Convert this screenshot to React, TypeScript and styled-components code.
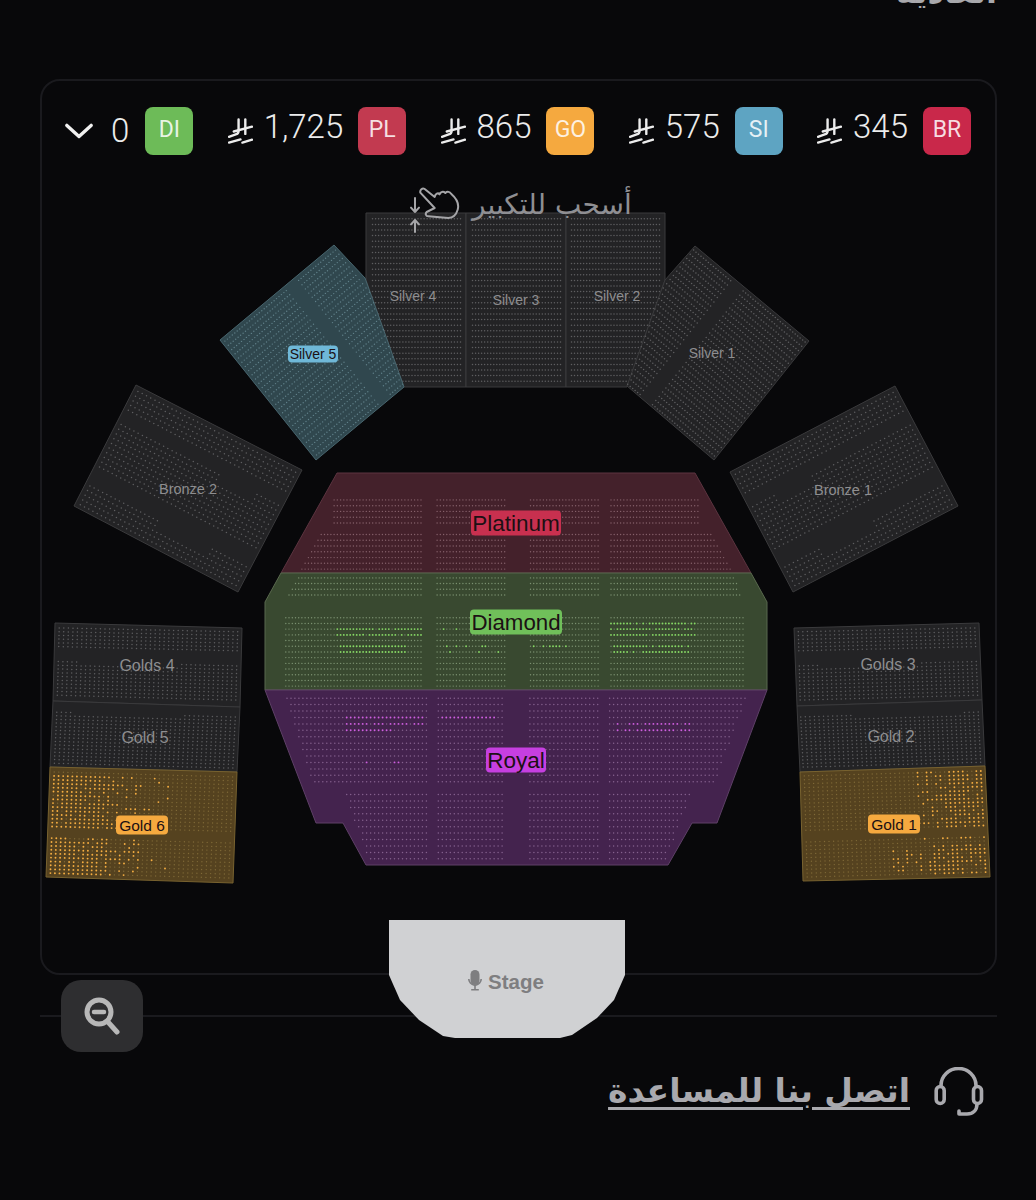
import { Fragment, useMemo } from 'react'
import styled, { createGlobalStyle } from 'styled-components'

const GlobalStyle = createGlobalStyle`
	html, body {
		margin: 0;
		padding: 0;
		background: #08080a;
	}
`

const Page = styled.div`
	width: 1036px;
	height: 1200px;
	box-sizing: border-box;
	padding: 0 39px 0 40px;
	overflow: hidden;
	background: #08080a;
	font-family: 'Roboto', sans-serif;
`

const ClippedTitle = styled.div`
	height: 8px;
	overflow: hidden;
	display: flex;
	justify-content: flex-start;
	align-items: flex-end;
	font-family: 'DejaVu Sans', sans-serif;
	font-weight: 700;
	font-size: 32px;
	line-height: 32px;
	color: #a8a8ac;
	direction: rtl;
`

const MapPanel = styled.section`
	position: relative;
	z-index: 1;
	box-sizing: border-box;
	height: 896px;
	margin-top: 71px;
	padding-top: 26px;
	border: 2px solid #1a1a1e;
	border-radius: 20px;
`

const PriceBar = styled.div`
	display: flex;
	justify-content: space-between;
	align-items: center;
	height: 48px;
	padding: 0 24px 0 23px;
`

const PriceGroup = styled.div`
	display: flex;
	align-items: center;
	gap: ${(p: { $gap: number }) => p.$gap}px;
`

const ZeroAmount = styled.span`
	margin-left: 6px;
`

const Amount = styled.span`
	font-size: 33px;
	font-weight: 350;
	line-height: 40px;
	padding-bottom: 9px;
	color: #ececec;
`

const TierBadge = styled.span<{ $color: string }>`
	display: flex;
	align-items: center;
	justify-content: center;
	box-sizing: border-box;
	width: 48px;
	height: 48px;
	margin-left: 4px;
	padding-bottom: 3px;
	border-radius: 8px;
	background: ${(p) => p.$color};
	color: rgba(255, 255, 255, 0.85);
	font-size: 23px;
	font-weight: 400;
`

const DragHint = styled.div`
	position: absolute;
	z-index: 2;
	top: 105px;
	left: 359px;
	display: flex;
	align-items: flex-start;
	gap: 11px;
`

const HintText = styled.span`
	font-family: 'DejaVu Sans', sans-serif;
	font-size: 28px;
	line-height: 40px;
	margin-top: -1px;
	color: #8f8f93;
	direction: rtl;
`

const SeatMap = styled.svg`
	display: block;
	margin: 25px 0 0 -2px;
	overflow: visible;
`

const SectionShape = styled.polygon<{ $fill: string; $stroke: string }>`
	fill: ${(p) => p.$fill};
	stroke: ${(p) => p.$stroke};
	stroke-width: 1;
`

const Seats = styled.path<{ $color: string; $size: number }>`
	fill: none;
	stroke: ${(p) => p.$color};
	stroke-width: ${(p) => p.$size};
	stroke-linecap: round;
`

const LabelText = styled.text<{ $size: number; $color: string }>`
	font-family: 'Liberation Sans', sans-serif;
	font-size: ${(p) => p.$size}px;
	fill: ${(p) => p.$color};
	text-anchor: middle;
	dominant-baseline: central;
`

const StageShape = styled.polygon`
	fill: #d0d1d3;
`

const StageLabel = styled.text`
	font-family: 'Liberation Sans', sans-serif;
	font-size: 20.5px;
	font-weight: 700;
	fill: #7e7e80;
	dominant-baseline: central;
`

const ToolRow = styled.div`
	height: 72px;
	margin-top: 5px;
	padding-left: 21px;
	background: linear-gradient(#1a1a1e, #1a1a1e) center / 100% 2px no-repeat;
`

const ZoomButton = styled.button`
	position: relative;
	z-index: 2;
	display: flex;
	align-items: center;
	justify-content: center;
	width: 82px;
	height: 72px;
	padding: 0;
	border: 0;
	border-radius: 20px;
	background: #2e2e30;
`

const ContactRow = styled.div`
	display: flex;
	justify-content: flex-end;
	align-items: center;
	gap: 24px;
	height: 56px;
	margin-top: 12px;
	padding-right: 13px;
	color: #a9a9ae;
`

const ContactLink = styled.a`
	font-family: 'DejaVu Sans', sans-serif;
	font-size: 33px;
	font-weight: 700;
	margin-top: -3px;
	color: #a9a9ae;
	text-decoration: underline;
	text-underline-offset: 5px;
	direction: rtl;
`

type Point = [number, number]
type Box = [number, number, number, number]

type Tone = { fill: string; stroke: string; seat: string; lit: string; size: number }

const tones: Record<string, Tone> = {
	gray: { fill: '#232325', stroke: '#3a3a3c', seat: '#5e5e60', lit: '#5e5e60', size: 1.5 },
	silver: { fill: '#30474e', stroke: '#48666f', seat: '#5f7f88', lit: '#5f7f88', size: 1.4 },
	platinum: { fill: '#44212b', stroke: '#5c3440', seat: '#85606a', lit: '#85606a', size: 1.4 },
	diamond: { fill: '#394930', stroke: '#59694e', seat: '#7b9170', lit: '#86d865', size: 1.4 },
	royal: { fill: '#44234e', stroke: '#5e4067', seat: '#84608d', lit: '#cf5fe0', size: 1.5 },
	gold: { fill: '#55421f', stroke: '#78622f', seat: '#7f6937', lit: '#f5ae42', size: 1.4 },
}

type Section = {
	id: string
	tone: string
	poly: Point[]
	quad: [Point, Point, Point, Point]
	rows: number
	cols: number
	area?: Point[]
	gaps?: Box[] // u0, u1, v0, v1 in grid space
	xGaps?: [number, number][]
	lit?: [number, number, number, number, number][] // x0, y0, x1, y1, density
}

const bronzeGaps: Box[] = [
	[0, 1, 0.19, 0.27],
	[0.62, 0.85, 0.27, 0.35],
	[0, 1, 0.7, 0.78],
	[0.45, 0.75, 0.78, 0.86],
]
const goldTopGaps: Box[] = [
	[0, 1, 0.33, 0.46],
	[0.12, 0.68, 0.46, 0.5],
]

const rect = (x0: number, y0: number, x1: number, y1: number): [Point, Point, Point, Point] => [
	[x0, y0],
	[x1, y0],
	[x1, y1],
	[x0, y1],
]

const sections: Section[] = [
	{ id: 'silver4', tone: 'gray', poly: [[366, 213], [466, 213], [466, 387], [404, 387], [366, 280]], quad: rect(371, 216, 462, 384), rows: 30, cols: 30 },
	{ id: 'silver3', tone: 'gray', poly: [[466, 213], [566, 213], [566, 387], [466, 387]], quad: rect(471, 216, 562, 384), rows: 30, cols: 30 },
	{ id: 'silver2', tone: 'gray', poly: [[566, 213], [665, 213], [665, 280], [627, 387], [566, 387]], quad: rect(570, 216, 661, 384), rows: 30, cols: 30 },
	{ id: 'silver1', tone: 'gray', poly: [[695, 246], [809, 341], [714, 460], [627, 386], [665, 280]], quad: [[808, 341], [694, 247], [600, 365], [714, 459]], rows: 28, cols: 46, gaps: [[0.57, 0.66, 0, 1]] },
	{ id: 'silver5', tone: 'silver', poly: [[334, 245], [365, 278], [404, 387], [316, 460], [220, 340]], quad: [[222, 340], [335, 247], [430, 365], [317, 458]], rows: 28, cols: 46, gaps: [[0.57, 0.66, 0, 1]] },
	{ id: 'bronze2', tone: 'gray', poly: [[136, 385], [302, 470], [238, 592], [74, 506]], quad: [[137, 388], [299, 471], [237, 589], [77, 506]], rows: 25, cols: 38, gaps: bronzeGaps },
	{ id: 'bronze1', tone: 'gray', poly: [[895, 386], [958, 506], [793, 592], [730, 472]], quad: [[894, 389], [732, 473], [794, 589], [955, 506]], rows: 25, cols: 38, gaps: bronzeGaps },
	{
		id: 'platinum', tone: 'platinum',
		poly: [[337, 473], [695, 473], [751, 573], [281, 573]],
		quad: rect(281, 497, 751, 572), rows: 13, cols: 146,
		area: [[331, 497], [700, 497], [700, 526], [712, 533], [733, 572], [299, 572], [320, 533], [331, 526]],
		xGaps: [[422, 434], [505, 528], [600, 610]],
		gaps: [[0, 1, 0.38, 0.46]],
	},
	{
		id: 'diamond', tone: 'diamond',
		poly: [[281, 573], [751, 573], [767, 602], [767, 690], [265, 690], [265, 602]],
		quad: rect(281, 575, 751, 689), rows: 20, cols: 146,
		area: [[300, 574], [732, 574], [745, 600], [745, 690], [285, 690], [285, 600]],
		xGaps: [[423, 435], [505, 528], [600, 610]],
		gaps: [[0, 1, 0.2, 0.36]],
		lit: [
			[336, 626, 424, 640, 0.9], [340, 644, 408, 654, 1], [434, 626, 500, 634, 0.2], [446, 644, 500, 652, 0.3],
			[610, 620, 695, 640, 0.9], [612, 644, 690, 654, 0.9], [530, 644, 590, 650, 0.5],
		],
	},
	{
		id: 'royal', tone: 'royal',
		poly: [[265, 690], [767, 690], [717, 823], [692, 823], [668, 865], [366, 865], [343, 823], [316, 823]],
		quad: rect(281, 695, 751, 862), rows: 26, cols: 118,
		area: [[285, 695], [748, 695], [712, 790], [692, 790], [665, 862], [368, 862], [345, 790], [315, 790]],
		xGaps: [[427, 437], [505, 528], [600, 608]],
		gaps: [[0, 1, 0.54, 0.57]],
		lit: [
			[345, 717, 425, 722, 1], [345, 722, 425, 729, 0.9], [345, 729, 392, 735, 1],
			[440, 716, 498, 722, 0.9], [616, 722, 690, 735, 0.8], [365, 762, 370, 768, 1], [394, 762, 400, 768, 1],
		],
	},
	{ id: 'gold4', tone: 'gray', poly: [[55, 623], [242, 628], [240, 707], [53, 701]], quad: [[57, 626], [240, 630], [238, 702], [55, 697]], rows: 19, cols: 40, gaps: goldTopGaps },
	{ id: 'gold5', tone: 'gray', poly: [[53, 701], [240, 707], [237, 772], [50, 767]], quad: [[55, 703], [238, 708], [235, 770], [52, 765]], rows: 17, cols: 40, gaps: [[0, 1, 0, 0.14], [0.1, 0.7, 0.14, 0.2]] },
	{
		id: 'gold6', tone: 'gold',
		poly: [[50, 767], [237, 772], [233, 883], [46, 877]],
		quad: [[52, 770], [235, 775], [231, 880], [48, 875]], rows: 27, cols: 40,
		gaps: [[0, 1, 0.56, 0.64]],
		lit: [[48, 775, 78, 880, 0.95], [78, 775, 110, 880, 0.8], [110, 775, 140, 880, 0.35], [140, 775, 170, 880, 0.1]],
	},
	{ id: 'gold3', tone: 'gray', poly: [[794, 628], [979, 623], [982, 700], [797, 706]], quad: [[796, 630], [977, 626], [980, 697], [798, 702]], rows: 19, cols: 40, gaps: goldTopGaps },
	{ id: 'gold2', tone: 'gray', poly: [[797, 706], [982, 700], [985, 766], [800, 772]], quad: [[798, 708], [980, 703], [983, 764], [801, 769]], rows: 17, cols: 40, gaps: [[0, 1, 0, 0.14], [0.3, 0.9, 0.14, 0.2]] },
	{
		id: 'gold1', tone: 'gold',
		poly: [[800, 772], [985, 766], [990, 877], [803, 881]],
		quad: [[802, 774], [983, 769], [988, 874], [805, 879]], rows: 27, cols: 40,
		gaps: [[0, 1, 0.56, 0.64]],
		lit: [[945, 768, 990, 840, 0.8], [915, 768, 945, 840, 0.4], [890, 845, 930, 880, 0.35], [930, 845, 990, 880, 0.75]],
	},
]

const labels = [
	{ text: 'Silver 4', x: 413, y: 296, size: 14 },
	{ text: 'Silver 3', x: 516, y: 300, size: 14 },
	{ text: 'Silver 2', x: 617, y: 296, size: 14 },
	{ text: 'Silver 1', x: 712, y: 353, size: 14 },
	{ text: 'Bronze 2', x: 188, y: 489, size: 14.5 },
	{ text: 'Bronze 1', x: 843, y: 490, size: 14.5 },
	{ text: 'Golds 4', x: 147, y: 665, size: 16 },
	{ text: 'Gold 5', x: 145, y: 737, size: 16 },
	{ text: 'Golds 3', x: 888, y: 664, size: 16 },
	{ text: 'Gold 2', x: 891, y: 736, size: 16 },
]

const badges = [
	{ text: 'Silver 5', x: 313, y: 354, size: 14, w: 50, h: 17, color: '#6fb8d8' },
	{ text: 'Gold 6', x: 142, y: 825, size: 15.5, w: 52, h: 19, color: '#f5a93f' },
	{ text: 'Gold 1', x: 894, y: 824, size: 15.5, w: 52, h: 19, color: '#f5a93f' },
	{ text: 'Platinum', x: 516, y: 523, size: 22.5, w: 90, h: 25, color: '#c8304f' },
	{ text: 'Diamond', x: 516, y: 622, size: 22.3, w: 92, h: 25, color: '#70c05a' },
	{ text: 'Royal', x: 516, y: 760, size: 22.5, w: 60, h: 25, color: '#c63fe0' },
]

const prices = [
	{ amount: '1,725', code: 'PL', color: '#c23a50' },
	{ amount: '865', code: 'GO', color: '#f5a93f' },
	{ amount: '575', code: 'SI', color: '#5ea4c2' },
	{ amount: '345', code: 'BR', color: '#c9284a' },
]

const stagePoints = '389,920 625,920 625,975 614,1000 597,1018 572,1035 560,1038 455,1038 443,1036 419,1020 400,1000 389,975'

const toPoints = (pts: Point[]) => pts.map((p) => p.join(',')).join(' ')

const inside = ([x, y]: Point, pts: Point[]) => {
	let hit = false
	for (let i = 0, j = pts.length - 1; i < pts.length; j = i++) {
		const [xi, yi] = pts[i]
		const [xj, yj] = pts[j]
		if (yi > y !== yj > y && x < ((xj - xi) * (y - yi)) / (yj - yi) + xi) hit = !hit
	}
	return hit
}

/* Cheap repeatable noise, so the sold seats stay put between renders */
const noise = (i: number, j: number) => {
	const n = Math.sin(i * 12.9898 + j * 78.233) * 43758.5453
	return n - Math.floor(n)
}

const buildSeats = (s: Section) => {
	const [a, b, c, d] = s.quad
	const area = s.area ?? s.poly
	let normal = ''
	let lit = ''
	for (let j = 0; j < s.rows; j++) {
		const v = (j + 0.5) / s.rows
		for (let i = 0; i < s.cols; i++) {
			const u = (i + 0.5) / s.cols
			if (s.gaps?.some(([u0, u1, v0, v1]) => u >= u0 && u <= u1 && v >= v0 && v <= v1)) continue
			const x = (1 - v) * ((1 - u) * a[0] + u * b[0]) + v * ((1 - u) * d[0] + u * c[0])
			const y = (1 - v) * ((1 - u) * a[1] + u * b[1]) + v * ((1 - u) * d[1] + u * c[1])
			if (!inside([x, y], area)) continue
			if (s.xGaps?.some(([x0, x1]) => x >= x0 && x <= x1)) continue
			const seat = `M${x.toFixed(1)} ${y.toFixed(1)}h.01`
			const zone = s.lit?.find(([x0, y0, x1, y1]) => x >= x0 && x <= x1 && y >= y0 && y <= y1)
			if (zone && noise(i, j) < zone[4]) lit += seat
			else normal += seat
		}
	}
	return { normal, lit }
}

/* The riyal mark in the price bar */
const RiyalIcon = () => (
	<svg width='25' height='26' viewBox='0 0 26 26' fill='none' stroke='#ececec' strokeWidth='2.5' strokeLinecap='round'>
		<path d='M11 1v12c0 2-1 3-3 3.6L1 19' />
		<path d='M18 1v15' />
		<path d='M6 13.5 25 8.5' />
		<path d='M1 25l12-3.2' />
		<path d='M15 25l10-3' />
	</svg>
)

const ChevronIcon = () => (
	<svg width='28' height='16' viewBox='0 0 30 16' fill='none' stroke='#f0f0f0' strokeWidth='3.6' strokeLinecap='round' strokeLinejoin='round'>
		<path d='M2 2l13 12L28 2' />
	</svg>
)

const PinchHandIcon = () => (
	<svg width='60' height='50' viewBox='0 0 180 150' fill='none' stroke='#a5a5a8' strokeWidth='6' strokeLinecap='round' strokeLinejoin='round'>
		<path d='M58 20c-2-8 6-15 13-11l30 24c2-10 10-14 15-8 2-8 11-10 17-4 6-6 13-4 18 3 16 14 24 30 19 47-4 14-14 24-28 25l-60-5c-8 0-10-8-5-13l24-12z' />
		<path d='M42 36v42M30 65l12 13 12-13' />
		<path d='M42 138v-36M30 115l12-13 12 13' />
	</svg>
)

const ZoomOutIcon = () => (
	<svg width='36' height='38' viewBox='0 0 36 38' fill='none' stroke='#b8b8b8' strokeLinecap='round'>
		<circle cx='15' cy='15' r='12' strokeWidth='5' />
		<path d='M10 15h10' strokeWidth='4.5' />
		<path d='M24 25l9 10' strokeWidth='5' />
	</svg>
)

const HeadsetIcon = () => (
	<svg width='50' height='50' viewBox='0 0 50 50' fill='none' stroke='currentColor' strokeWidth='3.6' strokeLinecap='round' strokeLinejoin='round'>
		<path d='M7 19.5v-1a17.5 17 0 0 1 35 0v1' />
		<rect x='2.2' y='19.5' width='8' height='17' rx='4' />
		<rect x='39.5' y='19.5' width='8' height='17' rx='4' />
		<path d='M43 37c0 6-4 10-10 10h-8v-3' />
	</svg>
)

const MicIcon = () => (
	<g fill='#7e7e80'>
		<rect x='470.5' y='970' width='9' height='15' rx='4.5' />
		<path d='M468 979h1.6a5.4 5.4 0 0 0 10.8 0h1.6a7 7 0 0 1-6.2 6.9v3.1h3v1.6h-7.6V989h3v-3.1a7 7 0 0 1-6.2-6.9z' />
	</g>
)

const VenueMap = () => {
	const seats = useMemo(() => sections.map((s) => ({ ...s, ...buildSeats(s) })), [])
	return (
		<SeatMap width='957' height='860' viewBox='40 180 957 860'>
			{seats.map((s) => {
				const tone = tones[s.tone]
				return (
					<Fragment key={s.id}>
						<SectionShape points={toPoints(s.poly)} $fill={tone.fill} $stroke={tone.stroke} />
						<Seats d={s.normal} $color={tone.seat} $size={tone.size} />
						{s.lit && <Seats d={s.lit} $color={tone.lit} $size={1.9} />}
					</Fragment>
				)
			})}
			{labels.map((l) => (
				<LabelText key={l.text} x={l.x} y={l.y} $size={l.size} $color='#8e8e90'>
					{l.text}
				</LabelText>
			))}
			{badges.map((l) => (
				<Fragment key={l.text}>
					<rect x={l.x - l.w / 2} y={l.y - l.h / 2} width={l.w} height={l.h} rx='4' fill={l.color} />
					<LabelText x={l.x} y={l.y} $size={l.size} $color='#1c1014'>
						{l.text}
					</LabelText>
				</Fragment>
			))}
			<StageShape points={stagePoints} />
			<MicIcon />
			<StageLabel x='488' y='981'>Stage</StageLabel>
		</SeatMap>
	)
}

const App = () => (
	<Page>
		<GlobalStyle />
		<ClippedTitle>العادية</ClippedTitle>
		<MapPanel>
			<PriceBar>
				<PriceGroup $gap={12}>
					<ChevronIcon />
					<PriceGroup $gap={12}>
						<ZeroAmount>
							<Amount>0</Amount>
						</ZeroAmount>
						<TierBadge $color='#6dbb58'>DI</TierBadge>
					</PriceGroup>
				</PriceGroup>
				{prices.map((p) => (
					<PriceGroup key={p.code} $gap={11}>
						<RiyalIcon />
						<Amount>{p.amount}</Amount>
						<TierBadge $color={p.color}>{p.code}</TierBadge>
					</PriceGroup>
				))}
			</PriceBar>
			<DragHint>
				<PinchHandIcon />
				<HintText>أسحب للتكبير</HintText>
			</DragHint>
			<VenueMap />
		</MapPanel>
		<ToolRow>
			<ZoomButton aria-label='zoom out'>
				<ZoomOutIcon />
			</ZoomButton>
		</ToolRow>
		<ContactRow>
			<ContactLink href='#'>اتصل بنا للمساعدة</ContactLink>
			<HeadsetIcon />
		</ContactRow>
	</Page>
)

export default App
